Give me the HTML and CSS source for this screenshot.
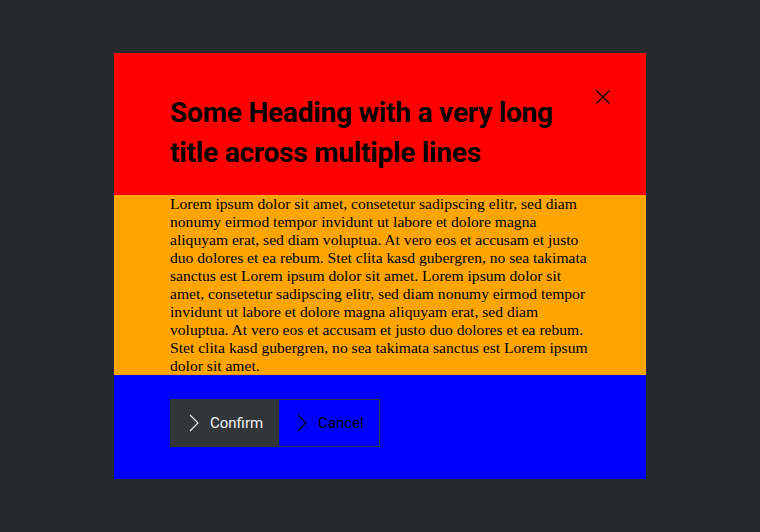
FILE: index.html
```html
<!DOCTYPE html>
<html>
<head>
<meta charset="utf-8">
<link rel="stylesheet" href="styles.css">
</head>
<body>
<div class="backdrop">
  <div class="modal">
    <div class="modal-header">
      <h2 class="heading">Some Heading with a very long title across multiple lines</h2>
      <button class="close" aria-label="Close">
        <svg width="16" height="16" viewBox="0 0 16 16"><path d="M1.5 1.5 L14.5 14.5 M14.5 1.5 L1.5 14.5" stroke="#000" stroke-width="1.2" fill="none"/></svg>
      </button>
    </div>
    <div class="modal-body">
      Lorem ipsum dolor sit amet, consetetur sadipscing elitr, sed diam nonumy eirmod tempor invidunt ut labore et dolore magna aliquyam erat, sed diam voluptua. At vero eos et accusam et justo duo dolores et ea rebum. Stet clita kasd gubergren, no sea takimata sanctus est Lorem ipsum dolor sit amet. Lorem ipsum dolor sit amet, consetetur sadipscing elitr, sed diam nonumy eirmod tempor invidunt ut labore et dolore magna aliquyam erat, sed diam voluptua. At vero eos et accusam et justo duo dolores et ea rebum. Stet clita kasd gubergren, no sea takimata sanctus est Lorem ipsum dolor sit amet.
    </div>
    <div class="modal-footer">
      <div class="btn-group">
        <button class="btn btn-primary">
          <svg class="chev" width="10" height="18" viewBox="0 0 10 18"><path d="M1 1 L9 9 L1 17" stroke="currentColor" stroke-width="1.1" fill="none"/></svg>
          <span>Confirm</span>
        </button>
        <button class="btn btn-secondary">
          <svg class="chev" width="10" height="18" viewBox="0 0 10 18"><path d="M1 1 L9 9 L1 17" stroke="currentColor" stroke-width="1.1" fill="none"/></svg>
          <span>Cancel</span>
        </button>
      </div>
    </div>
  </div>
</div>
</body>
</html>
```

FILE: styles.css
```css
html, body {
  margin: 0;
  padding: 0;
  height: 100%;
}
body {
  background: #262a2e;
  font-family: "Liberation Serif", "Times New Roman", serif;
}
.backdrop {
  height: 100%;
  display: flex;
  align-items: center;
  justify-content: center;
}
.modal {
  width: 532px;
  display: flex;
  flex-direction: column;
}
.modal-header {
  background: #ff0000;
  padding: 40px 56px 22px 56px;
  display: flex;
  align-items: flex-start;
  gap: 24px;
  height: 80px;
}
.heading {
  margin: 0;
  flex: 1;
  font-family: "Roboto", "Liberation Sans", sans-serif;
  font-weight: 700;
  font-size: 28px;
  line-height: 40px;
  color: #000;
  letter-spacing: -0.2px;
}
.close {
  margin: -4px -21px 0 0;
  padding: 0;
  border: 0;
  background: none;
  width: 16px;
  height: 16px;
  display: flex;
}
.modal-body {
  background: #ffa500;
  padding: 0 56px;
  font-size: 15.6px;
  line-height: 18px;
  color: #000;
  height: 180px;
  box-sizing: border-box;
}
.modal-footer {
  background: #0000ff;
  padding: 24px 56px 32px 56px;
  display: flex;
}
.btn-group {
  display: flex;
  border: 1px solid #323639;
}
.btn {
  height: 46px;
  display: flex;
  align-items: center;
  gap: 11px;
  border: 0;
  margin: 0;
  padding: 0 0 0 18px;
  font-family: "Roboto", "Liberation Sans", sans-serif;
  font-size: 15px;
  cursor: pointer;
}
.btn-primary {
  background: #323639;
  color: #f2f2f2;
  width: 108px;
}
.btn-secondary {
  background: #0000ff;
  color: #000;
  width: 100px;
}
.chev {
  flex: none;
}
```
